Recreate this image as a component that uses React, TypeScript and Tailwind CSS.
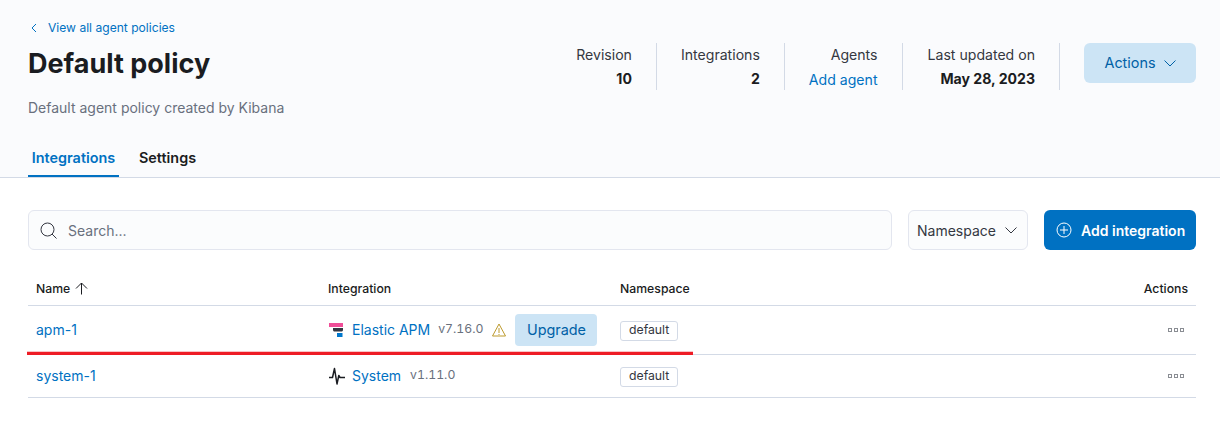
import React from "react";

const font = { fontFamily: "Inter, 'Noto Sans', sans-serif" };

function Stat({ label, children, extra }: { label: string; children: React.ReactNode; extra?: boolean }) {
  return (
    <div className={extra ? "mr-6 flex h-[47px] flex-col items-end border-r border-[#d3dae6] pl-[1px] pr-6 text-right" : "mr-6 flex h-[47px] flex-col items-end border-r border-[#d3dae6] pr-6 text-right"}>
      <div className="h-[24px] text-[14.1px] leading-[24px] text-[#343741]">{label}</div>
      <div className="h-[23px] text-[14.1px] leading-[23px]">{children}</div>
    </div>
  );
}

function ElasticApmIcon() {
  return (
    <svg width="16" height="16" viewBox="0 0 16 16" className="shrink-0">
      <path d="M1 1h14v4H1z" fill="#f04e98" />
      <path d="M5 6h10v2c0 .8-.7 1.5-1.5 1.5H6.5C5.7 9.500 5 8.800 5 8z" fill="#343741" />
      <rect x="9" y="11" width="5.5" height="4" fill="#0077cc" />
    </svg>
  );
}

function SystemIcon() {
  return (
    <svg width="18" height="18" viewBox="0 0 18 18" fill="none" className="-ml-[1px] mr-[-1px] shrink-0">
      <path d="M2 10.500h3.500L7.500 1.500 10 17l1.800-8.500 1.200 2h5" stroke="#1a1c21" strokeWidth="1.5" strokeLinejoin="round" />
    </svg>
  );
}

function Dots() {
  return (
    <svg width="16" height="4" viewBox="0 0 16 4" fill="none">
      <rect x="0.5" y="0.5" width="3" height="3" stroke="#8a8d93" />
      <rect x="6.5" y="0.5" width="3" height="3" stroke="#8a8d93" />
      <rect x="12.5" y="0.5" width="3" height="3" stroke="#8a8d93" />
    </svg>
  );
}

function Chevron({ color }: { color: string }) {
  return (
    <svg width="12" height="7" viewBox="0 0 12 7" fill="none">
      <path d="M0.5 0.5 6 6l5.5-5.5" stroke={color} strokeWidth="1" />
    </svg>
  );
}

function Badge() {
  return (
    <span className="inline-flex h-[20px] items-center rounded-[3px] border border-[#d3dae6] bg-white px-[8px] align-middle text-[12.25px] text-[#343741]">
      default
    </span>
  );
}

export default function App() {
  return (
    <div style={font} className="relative h-[426px] w-[1220px] overflow-hidden bg-white text-[#1a1c21]">
      <header className="h-[178px] border-b border-[#d3dae6] bg-[#fafbfd] pl-7 pr-6">
        <div className="flex h-[147px] justify-between">
          <div>
            <div className="mt-[19px] flex h-[18px] items-center text-[12.1px] text-[#0071c2]">
              <svg width="6" height="10" viewBox="0 0 6 10" fill="none" className="ml-[3px] mr-[11px]">
                <path d="M5 1 1 5l4 4" stroke="#0071c2" />
              </svg>
              View all agent policies
            </div>
            <h1 className="mt-[9px] text-[27px] font-bold leading-[36px] text-[#1a1c21]">Default policy</h1>
            <p className="mt-[16px] text-[14px] leading-[20px] text-[#69707d]">Default agent policy created by Kibana</p>
          </div>
          <div className="mt-[43px] flex items-start">
            <Stat label="Revision"><span className="font-bold">10</span></Stat>
            <Stat label="Integrations"><span className="font-bold">2</span></Stat>
            <Stat label="Agents"><span className="relative top-[1px] text-[#0071c2]">Add agent</span></Stat>
            <Stat label="Last updated on" extra><span className="font-bold">May 28, 2023</span></Stat>
            <button className="flex h-[40px] w-[112px] items-center justify-center gap-[8px] rounded-[6px] bg-[#cce4f5] text-[14.4px] text-[#0061a6]">
              Actions
              <Chevron color="#0061a6" />
            </button>
          </div>
        </div>
        <nav className="flex h-[30px] items-stretch gap-[16px] text-[14.4px] font-semibold">
          <div className="w-[91px] border-b-2 border-[#0071c2] pb-[8px] pt-[1px] text-center leading-[20px] text-[#0071c2]">Integrations</div>
          <div className="px-[4px] pt-[1px] leading-[20px]">Settings</div>
        </nav>
      </header>

      <main className="pl-7 pr-6 pt-[32px]">
        <div className="flex gap-[16px]">
          <div className="flex h-[40px] flex-1 items-center rounded-[6px] border border-[#e3e6ef] bg-[#fbfcfd] pl-[11px]">
            <svg width="17" height="17" viewBox="0 0 17 17" fill="none" className="mr-[11px]">
              <circle cx="7.5" cy="7.5" r="6.5" stroke="#343741" />
              <path d="m12 12 4.5 4.5" stroke="#343741" />
            </svg>
            <span className="text-[14px] text-[#69707d]">Search...</span>
          </div>
          <div className="flex h-[40px] w-[120px] items-center justify-between rounded-[6px] border border-[#e3e6ef] bg-[#fbfcfd] pl-[8px] pr-[10px] text-[14px] text-[#343741]">
            Namespace
            <Chevron color="#343741" />
          </div>
          <button className="flex h-[40px] w-[152px] items-center gap-[9px] rounded-[6px] bg-[#0071c2] pl-[12px] text-[14px] font-semibold text-white">
            <svg width="16" height="16" viewBox="0 0 16 16" fill="none">
              <circle cx="8" cy="8" r="7" stroke="white" />
              <path d="M8 4v8M4 8h8" stroke="white" />
            </svg>
            Add integration
          </button>
        </div>

        <table className="mt-[20px] w-full table-fixed border-collapse text-[14px]">
          <colgroup>
            <col className="w-[292px]" />
            <col className="w-[292px]" />
            <col />
            <col className="w-[100px]" />
          </colgroup>
          <thead>
            <tr className="h-[35px] border-b border-[#d3dae6] text-[12.25px]">
              <th className="px-2 pt-[3px] text-left font-medium">
                <span className="inline-flex items-center gap-[5px]">
                  Name
                  <svg width="13" height="13" viewBox="0 0 13 13" fill="none">
                    <path d="M6.500 12.500V1M1 6.500l5.500-5.500 5.500 5.500" stroke="#1a1c21" />
                  </svg>
                </span>
              </th>
              <th className="px-2 pt-[3px] text-left font-medium">Integration</th>
              <th className="px-2 pt-[3px] text-left font-medium">Namespace</th>
              <th className="px-2 pt-[3px] text-right font-medium">Actions</th>
            </tr>
          </thead>
          <tbody>
            <tr className="h-[49px] border-b border-[#d3dae6]">
              <td className="px-2 text-[#0071c2]">apm-1</td>
              <td className="px-2">
                <div className="flex items-center">
                  <ElasticApmIcon />
                  <span className="ml-[8px] text-[#0071c2]">Elastic APM</span>
                  <span className="ml-[8px] text-[12.25px] tabular-nums text-[#69707d]">v7.16.0</span>
                  <svg width="16" height="16" viewBox="0 0 16 16" fill="none" className="ml-[8px]">
                    <path d="M8 2 1.500 14h13L8 2Z" stroke="#bd9a2d" strokeLinejoin="round" />
                    <path d="M8 6v5M8 12v1" stroke="#bd9a2d" />
                  </svg>
                  <button className="ml-[8px] flex h-[32px] w-[82px] items-center justify-center rounded-[4px] bg-[#cce4f5] text-[14.4px] text-[#0061a6]">
                    Upgrade
                  </button>
                </div>
              </td>
              <td className="px-2"><Badge /></td>
              <td className="px-2">
                <div className="flex justify-end pr-[4px]"><Dots /></div>
              </td>
            </tr>
            <tr className="h-[43px] border-b border-[#d3dae6]">
              <td className="px-2 text-[#0071c2]">system-1</td>
              <td className="px-2">
                <div className="flex items-center">
                  <SystemIcon />
                  <span className="ml-[8px] text-[#0071c2]">System</span>
                  <span className="ml-[9px] text-[12.25px] tabular-nums text-[#69707d]">v1.11.0</span>
                </div>
              </td>
              <td className="px-2"><Badge /></td>
              <td className="px-2">
                <div className="flex justify-end pr-[4px]"><Dots /></div>
              </td>
            </tr>
          </tbody>
        </table>
      </main>
      <div className="absolute left-[27px] top-[352px] h-[3px] w-[666px] bg-[#ee1c25] shadow-[0_-1px_0_#f9c4c6]" />
    </div>
  );
}
